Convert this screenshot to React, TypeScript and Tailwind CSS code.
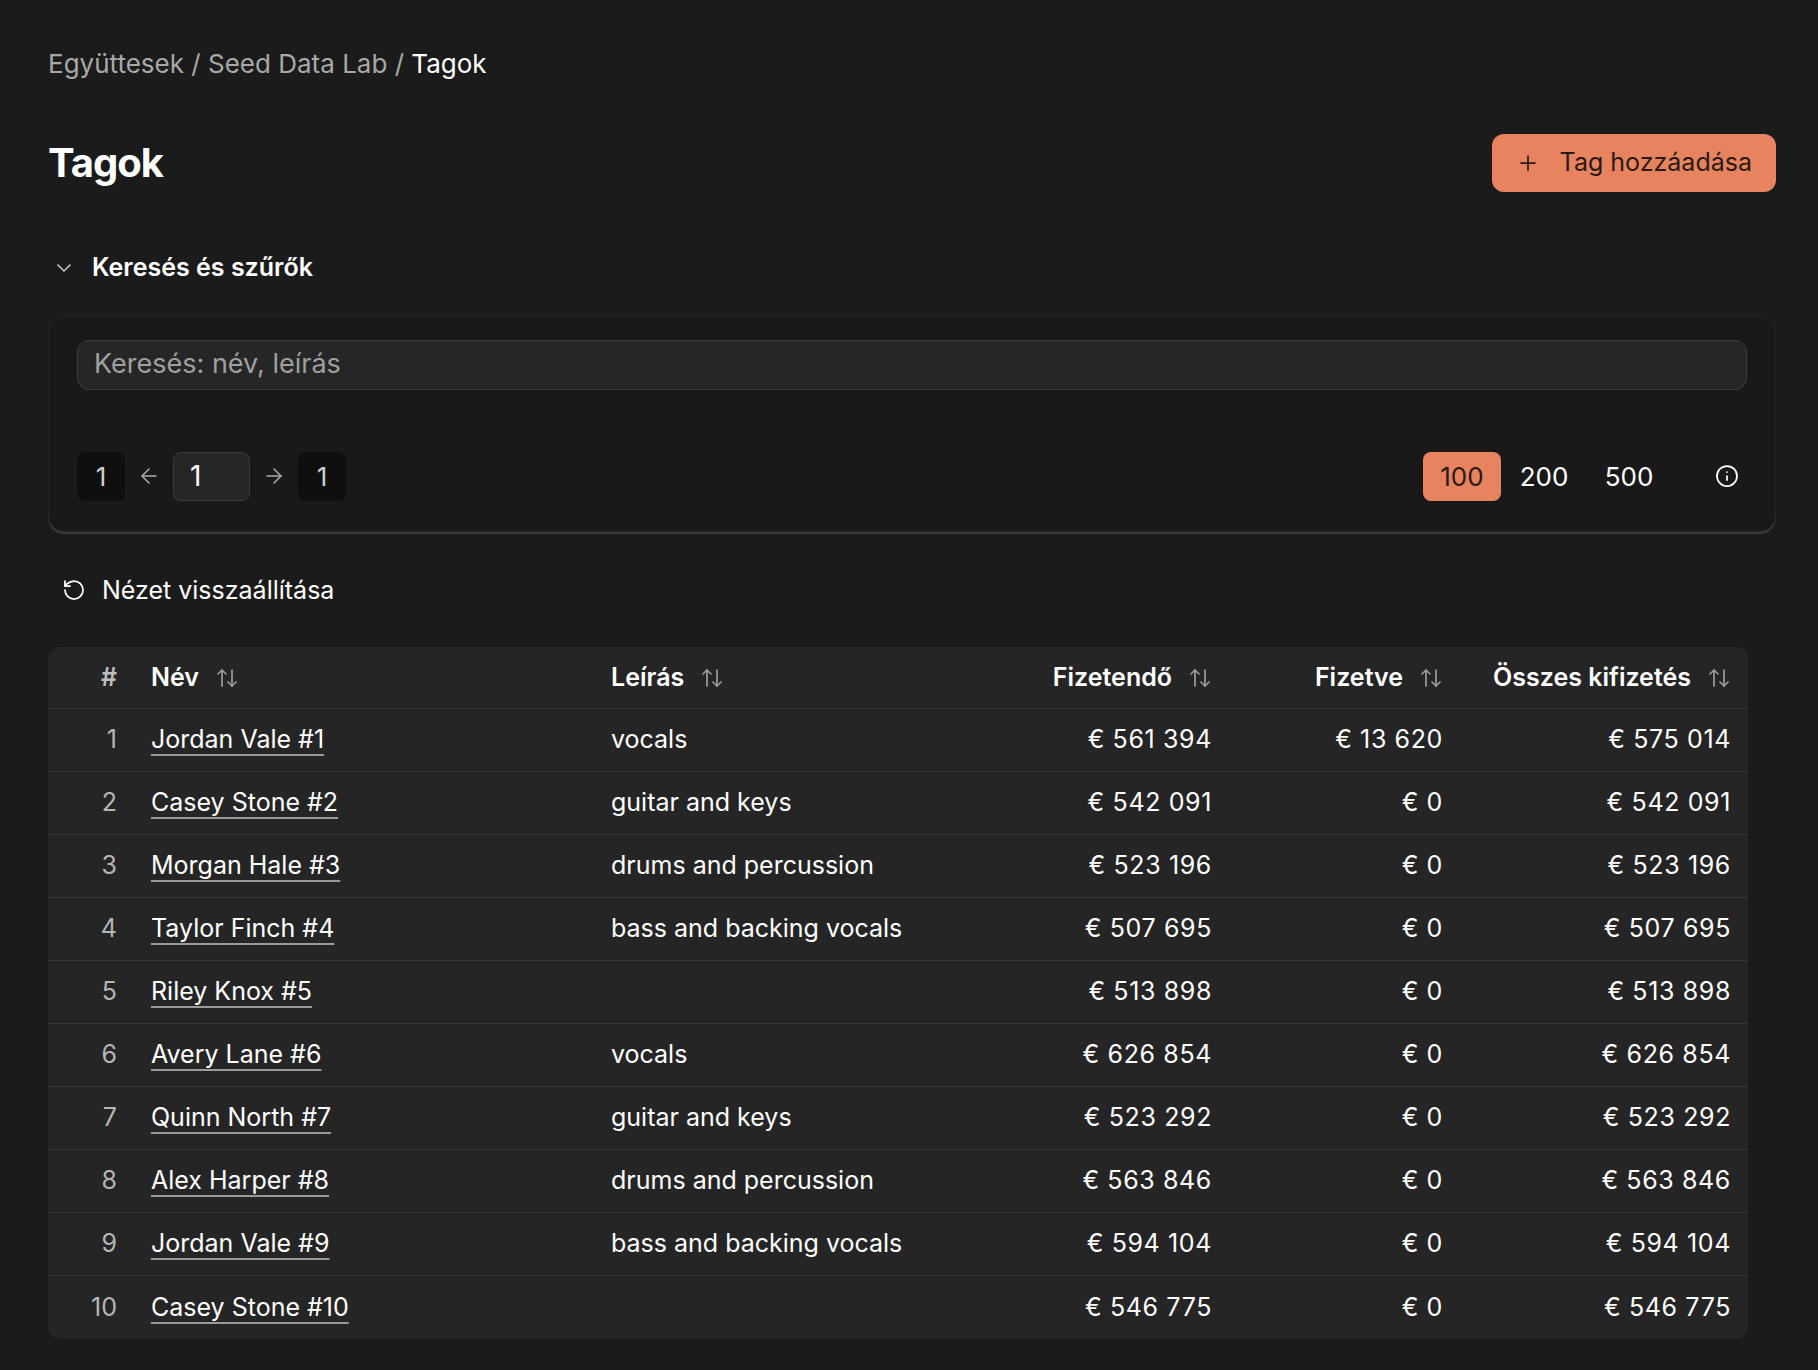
import { ArrowUpDown, ChevronDown, Plus, ArrowLeft, ArrowRight, Info, RotateCcw } from 'lucide-react';

const rows = [
  { n: 'Jordan Vale #1', d: 'vocals', due: '€ 561 394', paid: '€ 13 620', total: '€ 575 014' },
  { n: 'Casey Stone #2', d: 'guitar and keys', due: '€ 542 091', paid: '€ 0', total: '€ 542 091' },
  { n: 'Morgan Hale #3', d: 'drums and percussion', due: '€ 523 196', paid: '€ 0', total: '€ 523 196' },
  { n: 'Taylor Finch #4', d: 'bass and backing vocals', due: '€ 507 695', paid: '€ 0', total: '€ 507 695' },
  { n: 'Riley Knox #5', d: '', due: '€ 513 898', paid: '€ 0', total: '€ 513 898' },
  { n: 'Avery Lane #6', d: 'vocals', due: '€ 626 854', paid: '€ 0', total: '€ 626 854' },
  { n: 'Quinn North #7', d: 'guitar and keys', due: '€ 523 292', paid: '€ 0', total: '€ 523 292' },
  { n: 'Alex Harper #8', d: 'drums and percussion', due: '€ 563 846', paid: '€ 0', total: '€ 563 846' },
  { n: 'Jordan Vale #9', d: 'bass and backing vocals', due: '€ 594 104', paid: '€ 0', total: '€ 594 104' },
  { n: 'Casey Stone #10', d: '', due: '€ 546 775', paid: '€ 0', total: '€ 546 775' },
];

const cols = 'grid grid-cols-[87px_460px_405px_228px_231px_1fr]';

function Sort() {
  return <ArrowUpDown className="w-6 h-6 text-[#9a9a9a] ml-4 shrink-0" strokeWidth={1.75} />;
}

export default function App() {
  return (
    <div className="min-h-[1370px] bg-[#1b1b1b] text-white font-[Inter,sans-serif] px-12 pt-[44px]">
      <div className="text-[26px] text-[#a8a8a8]">
        Együttesek / Seed Data Lab / <span className="text-white">Tagok</span>
      </div>

      <div className="flex justify-between items-center mt-[50px]">
        <h1 className="text-[40px] font-bold tracking-tight">Tagok</h1>
        <button className="mr-[-6px] h-[58px] px-6 rounded-xl bg-[#e8835f] text-[#2a1a14] text-[25px] flex items-center gap-5">
          <Plus className="w-6 h-6" strokeWidth={1.75} />
          Tag hozzáadása
        </button>
      </div>

      <div className="flex items-center gap-4 mt-[56px] ml-1">
        <ChevronDown className="w-6 h-6 text-[#bbbbbb]" strokeWidth={1.75} />
        <span className="text-[25px] font-semibold">Keresés és szűrők</span>
      </div>

      <div className="mt-[28px] mr-[-6px] rounded-2xl bg-[#191919] border border-[#232323] shadow-[0_2px_0_#3a3a3a] px-7 pt-6 pb-[30px]">
        <div className="h-[50px] rounded-xl bg-[#262626] border border-[#3c3c3c] flex items-center px-4 text-[27px] text-[#a0a0a0]">
          Keresés: név, leírás
        </div>
        <div className="flex items-center justify-between mt-[62px]">
          <div className="flex items-center gap-[12px] text-[26px]">
            <div className="w-12 h-[49px] rounded-lg bg-[#0f0f0f] flex items-center justify-center text-[#cfcfcf]">1</div>
            <ArrowLeft className="w-6 h-6 text-[#aaaaaa]" strokeWidth={1.5} />
            <div className="w-[77px] h-[49px] rounded-lg bg-[#262626] border border-[#3c3c3c] flex items-center px-4 text-white text-[28px]">1</div>
            <ArrowRight className="w-6 h-6 text-[#aaaaaa]" strokeWidth={1.5} />
            <div className="w-12 h-[49px] rounded-lg bg-[#0f0f0f] flex items-center justify-center text-[#cfcfcf]">1</div>
          </div>
          <div className="flex items-center text-[26px] mr-2">
            <div className="w-[78px] h-[49px] rounded-lg bg-[#e8835f] text-[#2a1a14] flex items-center justify-center">100</div>
            <div className="w-[86px] text-center">200</div>
            <div className="w-[84px] text-center">500</div>
            <Info className="w-6 h-6 ml-[44px]" strokeWidth={1.75} />
          </div>
        </div>
      </div>

      <div className="flex items-center gap-4 mt-[40px] ml-[14px]">
        <RotateCcw className="w-6 h-6" strokeWidth={1.75} />
        <span className="text-[25px]">Nézet visszaállítása</span>
      </div>

      <div className="mt-[38px] mr-[22px] rounded-xl bg-[#252525] overflow-hidden text-[25px] whitespace-nowrap">
        <div className={`${cols} h-[62px] items-center font-semibold border-b border-[#363636]`}>
          <div className="text-right pr-[18px] text-[#bdbdbd]">#</div>
          <div className="pl-4 flex items-center">Név<Sort /></div>
          <div className="pl-4 flex items-center">Leírás<Sort /></div>
          <div className="pr-4 flex items-center justify-end">Fizetendő<Sort /></div>
          <div className="pr-4 flex items-center justify-end">Fizetve<Sort /></div>
          <div className="pr-[17px] flex items-center justify-end">Összes kifizetés<Sort /></div>
        </div>
        {rows.map((r, i) => (
          <div key={i} className={`${cols} h-[63px] items-center ${i < rows.length - 1 ? 'border-b border-[#363636]' : ''}`}>
            <div className="text-right pr-[18px] text-[#b5b5b5]">{i + 1}</div>
            <div className="pl-4">
              <span className="underline decoration-[#9a9a9a] underline-offset-[6px] decoration-2">{r.n}</span>
            </div>
            <div className="pl-4">{r.d}</div>
            <div className="pr-4 text-right tracking-wide">{r.due}</div>
            <div className="pr-4 text-right tracking-wide">{r.paid}</div>
            <div className="pr-[17px] text-right tracking-wide">{r.total}</div>
          </div>
        ))}
      </div>
    </div>
  );
}
